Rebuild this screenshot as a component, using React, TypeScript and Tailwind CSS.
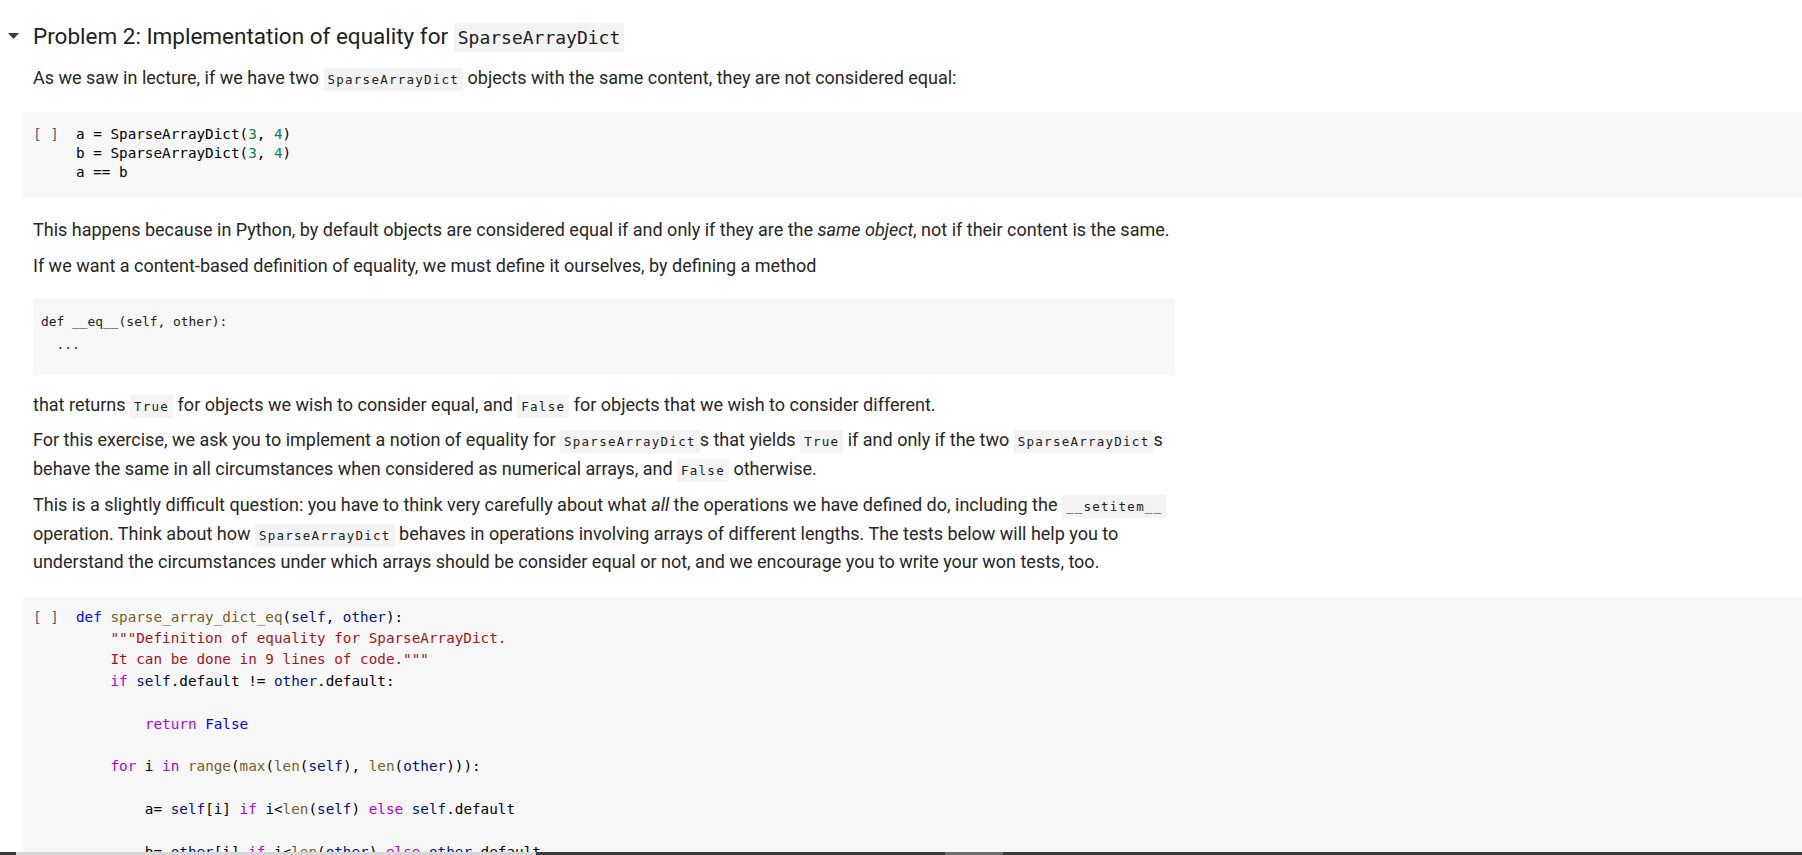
import React from 'react';

const mono = "font-['DejaVu_Sans_Mono',monospace]";

const tone: Record<string, string> = {
  kw: 'text-[#af00db]',
  def: 'text-[#0000ff]',
  var: 'text-[#001080]',
  fn: 'text-[#795e26]',
  str: 'text-[#a31515]',
  num: 'text-[#098658]',
  txt: 'text-[#000000]',
};

type Tok = [string, string?];

const cellOne: Tok[][] = [
  [['a = SparseArrayDict('], ['3', 'num'], [', '], ['4', 'num'], [')']],
  [['b = SparseArrayDict('], ['3', 'num'], [', '], ['4', 'num'], [')']],
  [['a == b']],
];

const cellTwo: Tok[][] = [
  [['def', 'def'], [' '], ['sparse_array_dict_eq', 'fn'], ['('], ['self', 'var'], [', '], ['other', 'var'], ['):']],
  [['    '], ['"""Definition of equality for SparseArrayDict.', 'str']],
  [['    '], ['It can be done in 9 lines of code."""', 'str']],
  [['    '], ['if', 'kw'], [' '], ['self', 'var'], ['.default != '], ['other', 'var'], ['.default:']],
  [],
  [['        '], ['return', 'kw'], [' '], ['False', 'def']],
  [],
  [
    ['    '], ['for', 'kw'], [' i '], ['in', 'kw'], [' '], ['range', 'fn'], ['('], ['max', 'fn'], ['('],
    ['len', 'fn'], ['('], ['self', 'var'], ['), '], ['len', 'fn'], ['('], ['other', 'var'], ['))):'],
  ],
  [],
  [
    ['        a= '], ['self', 'var'], ['[i] '], ['if', 'kw'], [' i<'], ['len', 'fn'], ['('], ['self', 'var'], [') '],
    ['else', 'kw'], [' '], ['self', 'var'], ['.default'],
  ],
  [],
  [
    ['        b= '], ['other', 'var'], ['[i] '], ['if', 'kw'], [' i<'], ['len', 'fn'], ['('], ['other', 'var'], [') '],
    ['else', 'kw'], [' '], ['other', 'var'], ['.default'],
  ],
  [],
  [['        '], ['if', 'kw'], [' a != b:']],
];

const Line = ({ toks }: { toks: Tok[] }) => (
  <div className="whitespace-pre">
    {toks.length === 0 ? ' ' : toks.map(([t, c], i) => (
      <span key={i} className={tone[c ?? 'txt']}>{t}</span>
    ))}
  </div>
);

// inline code inside markdown text
const Code = ({ children }: { children: React.ReactNode }) => (
  <code className={`${mono} text-[12.5px] tracking-[1.25px] leading-none bg-[#f3f3f3] px-[4px] py-[4px] text-[#212121]`}>
    {children}
  </code>
);

const CodeCell = ({ lines, lh, pt }: { lines: Tok[][]; lh: string; pt: string }) => (
  <div className={`ml-[23px] bg-[#f7f7f7] flex pl-[10px] ${pt} pb-[16px] ${mono} text-[14.3px] ${lh} shrink-0`}>
    <div className="w-[43px] text-[#616161] whitespace-pre shrink-0">[ ]</div>
    <div>
      {lines.map((l, i) => <Line key={i} toks={l} />)}
    </div>
  </div>
);

export default function App() {
  return (
    <div className="h-screen w-full bg-white flex flex-col overflow-hidden font-['Roboto',sans-serif] text-[#262626]">
      <div className="flex-1 min-h-0 overflow-hidden flex flex-col">
        {/* section header */}
        <div className="mt-[18px] h-[36px] flex items-center pl-[8px] shrink-0">
          <svg width="11" height="6" viewBox="0 0 11 6" className="shrink-0">
            <path d="M0 0 L11 0 L5.5 6 Z" fill="#3c3c3c" />
          </svg>
          <h2 className="ml-[14px] text-[22.5px] font-normal leading-[36px] whitespace-nowrap text-[#212121]">
            Problem 2: Implementation of equality for{' '}
            <code className={`${mono} text-[18px] leading-none bg-[#f3f3f3] px-[4px] py-[4px]`}>SparseArrayDict</code>
          </h2>
        </div>

        <div className="ml-[33px] w-[1180px] mt-[10px] text-[18px] leading-[28.5px] shrink-0">
          <p>
            As we saw in lecture, if we have two <Code>SparseArrayDict</Code> objects with the same content, they are not
            considered equal:
          </p>
        </div>

        <div className="mt-[19px]">
          <CodeCell lines={cellOne} lh="leading-[19px]" pt="pt-[13px]" />
        </div>

        <div className="ml-[33px] w-[1180px] text-[18px] leading-[28.5px] shrink-0">
          <p className="mt-[18px] whitespace-nowrap">
            This happens because in Python, by default objects are considered equal if and only if they are the{' '}
            <em>same object</em>, not if their content is the same.
          </p>
          <p className="mt-[8px]">
            If we want a content-based definition of equality, we must define it ourselves, by defining a method
          </p>
          <pre className={`mt-[17px] w-[1142px] h-[77px] bg-[#f7f7f7] pl-[8px] pt-[12px] ${mono} text-[12.9px] leading-[23px] text-[#212121]`}>
            {'def __eq__(self, other):\n  ...'}
          </pre>
          <p className="mt-[16px]">
            that returns <Code>True</Code> for objects we wish to consider equal, and <Code>False</Code> for objects that
            we wish to consider different.
          </p>
          <p className="mt-[7px] whitespace-nowrap">
            For this exercise, we ask you to implement a notion of equality for <Code>SparseArrayDict</Code>s that yields{' '}
            <Code>True</Code> if and only if the two <Code>SparseArrayDict</Code>s<br />
            behave the same in all circumstances when considered as numerical arrays, and <Code>False</Code> otherwise.
          </p>
          <p className="mt-[8px] whitespace-nowrap">
            This is a slightly difficult question: you have to think very carefully about what <em>all</em> the operations
            we have defined do, including the <Code>__setitem__</Code>
            <br />
            operation. Think about how <Code>SparseArrayDict</Code> behaves in operations involving arrays of different
            lengths. The tests below will help you to
            <br />
            understand the circumstances under which arrays should be consider equal or not, and we encourage you to write
            your won tests, too.
          </p>
        </div>

        <div className="mt-[21px]">
          <CodeCell lines={cellTwo} lh="leading-[21.4px]" pt="pt-[9px]" />
        </div>
      </div>

      {/* bottom strip */}
      <div className="h-[3px] flex shrink-0">
        <div className="w-[16px] bg-[#3a3a3a]" />
        <div className="w-[520px] bg-[#d6d6d6]" />
        <div className="w-[409px] bg-[#3a3a3a]" />
        <div className="w-[58px] bg-[#6e6e6e]" />
        <div className="flex-1 bg-[#3a3a3a]" />
      </div>
    </div>
  );
}
